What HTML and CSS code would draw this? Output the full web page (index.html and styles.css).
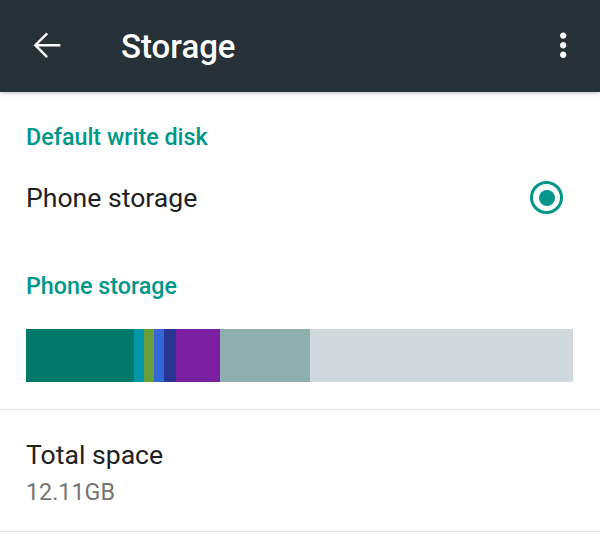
FILE: index.html
```html
<!DOCTYPE html>
<html>
<head>
<meta charset="utf-8">
<link rel="stylesheet" href="styles.css">
</head>
<body>
<header class="appbar">
  <svg class="icon back" viewBox="0 0 24 24"><path d="M20.2 12H4.6M12 4.6L4.6 12l7.4 7.4" fill="none" stroke="#fff" stroke-width="1.5"/></svg>
  <h1 class="title">Storage</h1>
  <svg class="icon more" viewBox="0 0 24 24"><path d="M12 8c1.1 0 2-.9 2-2s-.9-2-2-2-2 .9-2 2 .9 2 2 2zm0 2c-1.1 0-2 .9-2 2s.9 2 2 2 2-.9 2-2-.9-2-2-2zm0 6c-1.1 0-2 .9-2 2s.9 2 2 2 2-.9 2-2-.9-2-2-2z" fill="#fff"/></svg>
</header>
<main class="content">
  <div class="subheader first">Default write disk</div>
  <div class="radio-row">
    <span class="item-title">Phone storage</span>
    <span class="radio"><span class="radio-dot"></span></span>
  </div>
  <div class="subheader second">Phone storage</div>
  <div class="usage-bar">
    <span class="seg" style="width:108px;background:#00796b"></span>
    <span class="seg" style="width:10px;background:#0097a7"></span>
    <span class="seg" style="width:10px;background:#689f38"></span>
    <span class="seg" style="width:10px;background:#3367d6"></span>
    <span class="seg" style="width:12px;background:#283593"></span>
    <span class="seg" style="width:44px;background:#7b1fa2"></span>
    <span class="seg" style="width:90px;background:#8dafad"></span>
    <span class="seg rest"></span>
  </div>
  <div class="divider bar-divider"></div>
  <div class="pref">
    <div class="item-title">Total space</div>
    <div class="summary">12.11GB</div>
  </div>
  <div class="divider"></div>
</main>
</body>
</html>
```

FILE: styles.css
```css
* { box-sizing: border-box; }
html, body { margin: 0; padding: 0; background: #fff; }
body {
  width: 600px;
  height: 538px;
  overflow: hidden;
  font-family: Roboto, "Noto Sans", sans-serif;
}
.appbar {
  height: 92px;
  background: #263238;
  display: flex;
  align-items: center;
  position: relative;
  box-shadow: 0 1px 4px rgba(0,0,0,0.25);
  z-index: 1;
}
.icon { width: 38.4px; height: 38.4px; flex: none; }
.back { margin-left: 27.6px; margin-top: -1px; }
.title {
  margin: 0 0 0 55px;
  color: #fff;
  font-size: 33px;
  font-weight: 500;
  line-height: 36px;
  flex: 1;
  position: relative;
  top: 1px;
}
.more { margin-right: 17.6px; margin-top: -1px; }
.content { padding: 0 27px 0 26px; }
.subheader {
  color: #009688;
  font-size: 23.3px;
  font-weight: 500;
  line-height: 30px;
}
.subheader.first { margin-top: 30px; }
.subheader.second { margin-top: 28px; }
.radio-row {
  height: 91px;
  display: flex;
  align-items: center;
  justify-content: space-between;
}
.item-title {
  color: #212121;
  font-size: 26.6px;
  line-height: 30px;
}
.radio {
  width: 33px;
  height: 33px;
  border: 3.4px solid #009688;
  border-radius: 50%;
  display: flex;
  align-items: center;
  justify-content: center;
  margin-right: 10px;
}
.radio-dot {
  width: 16px;
  height: 16px;
  border-radius: 50%;
  background: #009688;
}
.usage-bar {
  margin-top: 28px;
  height: 53px;
  display: flex;
}
.seg { display: block; height: 100%; flex: none; }
.seg.rest { flex: 1; background: #cfd8dc; }
.divider { height: 1px; background: #e0e0e0; margin: 0 -27px 0 -26px; }
.bar-divider { margin-top: 27px; }
.pref { padding: 30px 0 25px; }
.summary {
  color: #757575;
  font-size: 23.3px;
  line-height: 28px;
  margin-top: 8px;
}
```
